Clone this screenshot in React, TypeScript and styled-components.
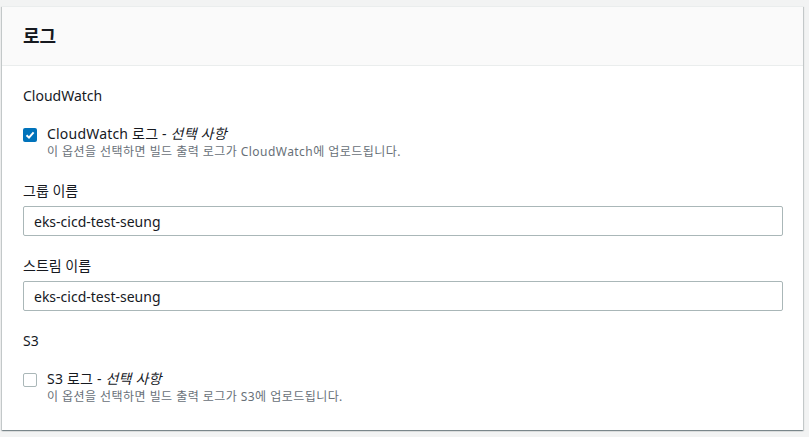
import React, { useState } from "react";
import styled, { createGlobalStyle } from "styled-components";

const GlobalStyle = createGlobalStyle`
    html, body {
        margin: 0;
        padding: 0;
        background: #f2f3f3;
    }
    body {
        font-family: "Noto Sans", "Noto Sans CJK KR", sans-serif;
        color: #16191f;
    }
`;

const Page = styled.div`
    padding: 6px 6px 6px 2px;
`;

const Card = styled.section`
    width: 801px;
    background: #ffffff;
    box-shadow: 0 1px 1px 0 rgba(0, 28, 36, 0.3),
        1px 1px 1px 0 rgba(0, 28, 36, 0.15),
        -1px 1px 1px 0 rgba(0, 28, 36, 0.15);
    border-top: 1px solid #eaeded;
`;

const Header = styled.header`
    height: 58px;
    display: flex;
    align-items: center;
    padding: 0 21px;
    background: #fafafa;
    border-bottom: 1px solid #eaeded;
`;

const Title = styled.h2`
    margin: 0;
    font-size: 18px;
    font-weight: 700;
    line-height: 22px;
    color: #16191f;
`;

const Body = styled.div`
    padding: 19px 20px 25px 21px;
    display: flex;
    flex-direction: column;
`;

const GroupTitle = styled.div`
    font-size: 14px;
    line-height: 22px;
    color: #16191f;
    margin-bottom: 17px;
`;

const CheckRow = styled.label`
    display: flex;
    gap: 10px;
    align-items: flex-start;
    cursor: pointer;
`;

const Box = styled.span<{ $checked: boolean }>`
    flex: none;
    width: 14px;
    height: 14px;
    margin-top: 4px;
    border-radius: 2px;
    box-sizing: border-box;
    display: flex;
    align-items: center;
    justify-content: center;
    background: ${(p) => (p.$checked ? "#0073bb" : "#ffffff")};
    border: ${(p) => (p.$checked ? "none" : "1px solid #aab7b8")};
`;

const CheckText = styled.div`
    display: flex;
    flex-direction: column;
`;

const CheckLabel = styled.span`
    font-size: 14px;
    line-height: 20px;
    letter-spacing: 0.2px;
    color: #16191f;

    em {
        font-style: italic;
    }
`;

const Hint = styled.span`
    font-size: 12px;
    line-height: 16px;
    letter-spacing: 0.45px;
    color: #687078;
`;

const Field = styled.div<{ $gap: number }>`
    display: flex;
    flex-direction: column;
    margin-top: ${(p) => p.$gap}px;
`;

const FieldLabel = styled.label`
    font-size: 14px;
    line-height: 20px;
    color: #16191f;
    margin-bottom: 5px;
`;

const Input = styled.input`
    box-sizing: border-box;
    width: 760px;
    height: 30px;
    padding: 4px 10px;
    border: 1px solid #aab7b8;
    border-radius: 2px;
    font-family: "Noto Sans", "Noto Sans CJK KR", sans-serif;
    font-size: 14px;
    color: #16191f;
    background: #ffffff;
    outline: none;
`;

const Section = styled.div<{ $gap: number }>`
    display: flex;
    flex-direction: column;
    margin-top: ${(p) => p.$gap}px;
`;

function Checkbox({
    checked,
    onToggle,
    label,
    hint,
}: {
    checked: boolean;
    onToggle: () => void;
    label: string;
    hint: string;
}) {
    return (
        <CheckRow onClick={onToggle}>
            <Box $checked={checked}>
                {checked && (
                    <svg width="10" height="10" viewBox="0 0 10 10">
                        <path
                            d="M1.5 5.2 L4 7.6 L8.6 2.4"
                            fill="none"
                            stroke="#fff"
                            strokeWidth="2"
                        />
                    </svg>
                )}
            </Box>
            <CheckText>
                <CheckLabel>
                    {label} - <em>선택 사항</em>
                </CheckLabel>
                <Hint>{hint}</Hint>
            </CheckText>
        </CheckRow>
    );
}

export default function App() {
    const [cw, setCw] = useState(true);
    const [s3, setS3] = useState(false);
    const [group, setGroup] = useState("eks-cicd-test-seung");
    const [stream, setStream] = useState("eks-cicd-test-seung");

    return (
        <Page>
            <GlobalStyle />
            <Card>
                <Header>
                    <Title>로그</Title>
                </Header>
                <Body>
                    <Section $gap={0}>
                        <GroupTitle>CloudWatch</GroupTitle>
                        <Checkbox
                            checked={cw}
                            onToggle={() => setCw(!cw)}
                            label="CloudWatch 로그"
                            hint="이 옵션을 선택하면 빌드 출력 로그가 CloudWatch에 업로드됩니다."
                        />
                    </Section>
                    <Field $gap={21}>
                        <FieldLabel>그룹 이름</FieldLabel>
                        <Input
                            value={group}
                            onChange={(e) => setGroup(e.target.value)}
                        />
                    </Field>
                    <Field $gap={20}>
                        <FieldLabel>스트림 이름</FieldLabel>
                        <Input
                            value={stream}
                            onChange={(e) => setStream(e.target.value)}
                        />
                    </Field>
                    <Section $gap={19}>
                        <GroupTitle>S3</GroupTitle>
                        <Checkbox
                            checked={s3}
                            onToggle={() => setS3(!s3)}
                            label="S3 로그"
                            hint="이 옵션을 선택하면 빌드 출력 로그가 S3에 업로드됩니다."
                        />
                    </Section>
                </Body>
            </Card>
        </Page>
    );
}
